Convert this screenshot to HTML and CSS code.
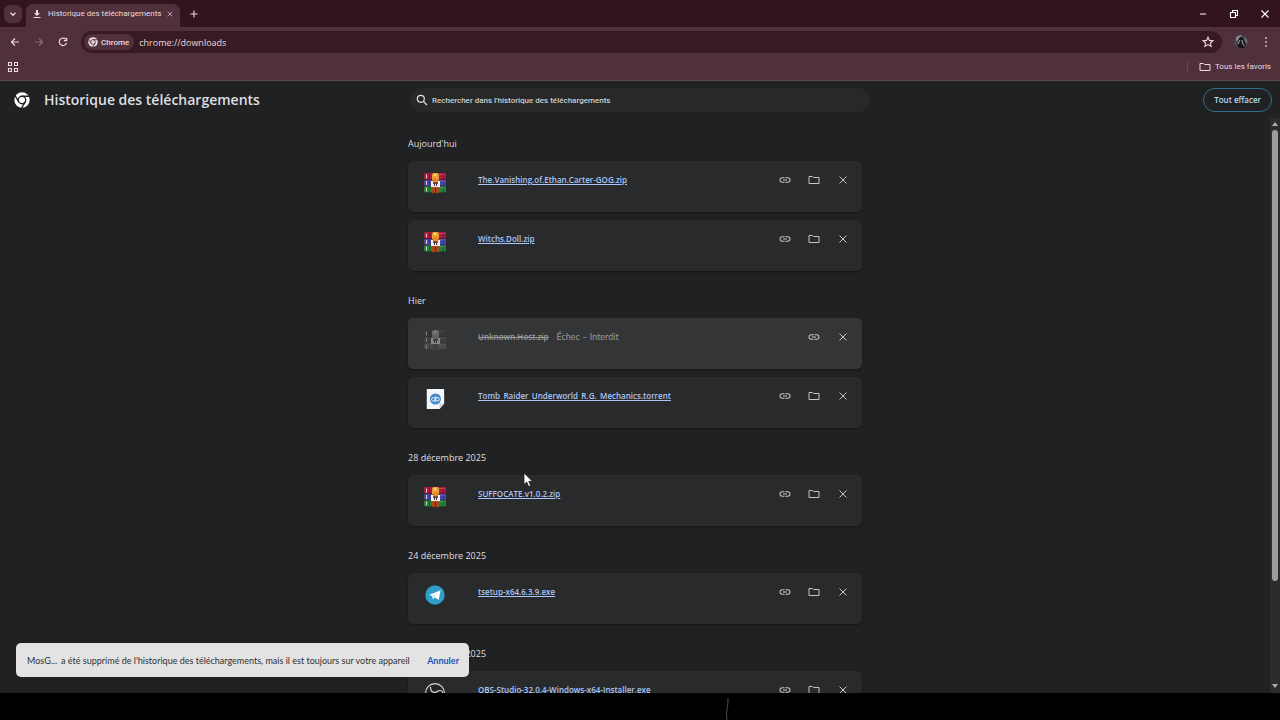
FILE: index.html
```html
<!DOCTYPE html>
<html lang="fr">
<head>
  <meta charset="UTF-8">
  <meta name="viewport" content="width=device-width, initial-scale=1.0">
  <title>Historique des téléchargements</title>
  <link rel="stylesheet" href="styles.css">
</head>
<body>
  <svg class="sprite" aria-hidden="true">
    <symbol id="chrome" viewBox="0 0 24 24">
      <circle cx="12" cy="12" r="11.5" fill="currentColor"/>
      <circle cx="12" cy="12" r="5.6" fill="none" stroke="var(--logo-gap)" stroke-width="2"/>
      <path d="M12 6.4H22.5M7.2 14.8L1.9 5.8M16.8 14.8L11.6 23.8" stroke="var(--logo-gap)" stroke-width="2" fill="none"/>
    </symbol>
    <symbol id="link" viewBox="0 0 24 24">
      <path d="M11 17.500H6.500a5.500 5.500 0 0 1 0-11H11v2H6.500a3.500 3.500 0 0 0 0 7H11zm-3-4.500v-2h8v2zm5 4.500v-2h4.500a3.500 3.500 0 0 0 0-7H13v-2h4.500a5.500 5.500 0 0 1 0 11z" fill="currentColor"/>
    </symbol>
    <symbol id="folder" viewBox="0 0 24 24">
      <path d="M2 5h7l2 2h11v12H2z" fill="none" stroke="currentColor" stroke-width="2" stroke-linejoin="round"/>
    </symbol>
    <symbol id="close" viewBox="0 0 24 24">
      <path d="M5 5l14 14M19 5L5 19" fill="none" stroke="currentColor" stroke-width="2"/>
    </symbol>
    <symbol id="rar" viewBox="0 0 22 20">
      <path d="M1 0h21v7H1L0 6V1z" fill="#a81a40"/>
      <path d="M1 7h21v6H1l-1-1V8z" fill="#4646a8"/>
      <path d="M1 13h21v7H1l-1-1v-5z" fill="#23803a"/>
      <path d="M0 6.500h22M0 13h22M0 19.500h22" stroke="#160f18" stroke-opacity=".45"/>
      <path d="M15 1.500h6M15 8h6M15 14.500h6" stroke="#fff" stroke-opacity=".2"/>
      <path d="M2.500 1.500v4M2.500 8v4M2.500 14.500v4" stroke="#e6cdbb"/>
      <path d="M5.500 1v5M5.500 8v4M5.500 14v5M19.500 1v5M19.500 8v4M19.500 14v5" stroke="#000" stroke-opacity=".25"/>
      <path d="M8 1h7v19H8z" fill="#a34a1d"/>
      <path d="M9 0h5l1 2v5H8V2z" fill="#eea03a"/>
      <path d="M10 1h2v2h-2z" fill="#ffdf72"/>
      <path d="M9 5h5v4H9z" fill="#e58a2c"/>
      <path d="M7 8h2v3h5V8h2v6H7z" fill="#f4eef0"/>
      <path d="M10 10h1v3h-1zM12 10h1v3h-1z" fill="#3a2c3a"/>
      <path d="M11.500 15v5" stroke="#6c2810"/>
    </symbol>
    <symbol id="torrent" viewBox="0 0 22 24">
      <path d="M2 1h19v16l-5 6H2z" fill="#f4f7fa"/>
      <path d="M21 17h-5v6z" fill="#c9d3dc"/>
      <circle cx="11.500" cy="12" r="6" fill="#3f83cb"/>
      <circle cx="9.300" cy="12.300" r="2" fill="none" stroke="#d4e8fc" stroke-width="1.100"/>
      <circle cx="13.700" cy="12.300" r="2" fill="none" stroke="#d4e8fc" stroke-width="1.100"/>
      <path d="M11.200 10.500v5.500M11.900 8.500v5.500" stroke="#d4e8fc"/>
    </symbol>
    <symbol id="telegram" viewBox="0 0 22 22">
      <circle cx="11" cy="11" r="9.700" fill="#2f9fc9"/>
      <path d="M5 10.900L16.600 6.300 14.700 16l-4-2.700-1.900 1.900-.6-3.200z" fill="#fff"/>
      <path d="M8.400 12l5.700-3.700-4.600 4.500-.7 2.200z" fill="#b9dcea"/>
    </symbol>
    <symbol id="obs" viewBox="0 0 22 22">
      <circle cx="11" cy="11" r="9.400" fill="#232425" stroke="#d8d8d8" stroke-width="1.200"/>
      <path d="M6.500 5c0 4 2 5.500 4.500 5.500S13 8.500 16 8.500s3 2.500 2 4.500M11 10.500c-3 1-3 5 0 6.500" fill="none" stroke="#d8d8d8" stroke-width="1.200"/>
    </symbol>
  </svg>

  <header class="browser">
    <div class="tab-strip">
      <button class="tab-search" aria-label="Rechercher dans les onglets">
        <svg viewBox="0 0 12 12"><path d="M3 4.500l3 3 3-3" fill="none" stroke="currentColor" stroke-width="1.500"/></svg>
      </button>
      <div class="tab">
        <svg class="tab-icon" viewBox="0 0 12 12"><path d="M5 2h2v3h2L6 8 3 5h2zM2.500 9h7v1h-7z" fill="currentColor"/></svg>
        <span class="tab-title">Historique des téléchargements</span>
        <button class="tab-close" aria-label="Fermer l'onglet"><svg><use href="#close"/></svg></button>
      </div>
      <button class="new-tab" aria-label="Nouvel onglet">
        <svg viewBox="0 0 12 12"><path d="M6 2.500v7M2.500 6h7" stroke="currentColor" stroke-width="1.100"/></svg>
      </button>
      <div class="window-controls">
        <button aria-label="Réduire"><svg viewBox="0 0 12 12"><path d="M3 6h6" stroke="currentColor" stroke-width="1"/></svg></button>
        <button aria-label="Restaurer"><svg viewBox="0 0 12 12"><path d="M2.500 4.500h5v5h-5zM4.500 4.500v-2h5v5h-2" fill="none" stroke="currentColor" stroke-width="1.100"/></svg></button>
        <button aria-label="Fermer"><svg viewBox="0 0 12 12"><path d="M2.500 2.500l7 7M9.500 2.500l-7 7" stroke="currentColor" stroke-width="1.100"/></svg></button>
      </div>
    </div>

    <div class="toolbar">
      <button aria-label="Retour"><svg viewBox="0 0 12 12"><path d="M10 6H2.500M6 2.500L2.500 6 6 9.500" fill="none" stroke="currentColor" stroke-width="1.200"/></svg></button>
      <button class="dim" aria-label="Avancer" disabled><svg viewBox="0 0 12 12"><path d="M2 6h7.500M6 2.500L9.500 6 6 9.500" fill="none" stroke="currentColor" stroke-width="1.200"/></svg></button>
      <button aria-label="Actualiser"><svg viewBox="0 0 12 12"><path d="M9.500 7A3.700 3.700 0 1 1 8.800 3.400M9.700 1.700v3H6.800" fill="none" stroke="currentColor" stroke-width="1.200"/></svg></button>
      <div class="omnibox">
        <span class="chip"><svg><use href="#chrome"/></svg>Chrome</span>
        <input class="url" type="text" value="chrome://downloads" aria-label="Adresse">
        <button class="star" aria-label="Ajouter aux favoris"><svg viewBox="0 0 12 12"><path d="M6 1.200l1.400 3.200 3.500.3-2.600 2.300.8 3.400L6 8.600l-3.100 1.800.8-3.400L1.100 4.700l3.500-.3z" fill="none" stroke="currentColor" stroke-width="1.100"/></svg></button>
      </div>
      <button class="avatar" aria-label="Profil">
        <svg viewBox="0 0 14 14">
          <circle cx="7" cy="7" r="7" fill="#4a464d"/>
          <path d="M2 2.500A7 7 0 0 1 7 0l1 2-3 3-3 1z" fill="#8d8992"/>
          <path d="M5 3l2-1.500L9 3l1.500 3 1.500 4-2 3H5L3 11l1-4z" fill="#19171c"/>
          <path d="M6 5l-2 4M8 5l.5 3 2 3" stroke="#b5b1ba" fill="none" stroke-width=".9"/>
          <path d="M10 2l3 3v4l-2-3z" fill="#77727c"/>
        </svg>
      </button>
      <button class="more" aria-label="Menu"><svg viewBox="0 0 12 12"><path d="M5.200 1.200h1.600v1.600H5.200zM5.200 5.200h1.600v1.600H5.200zM5.200 9.200h1.600v1.600H5.200z" fill="currentColor"/></svg></button>
    </div>

    <div class="bookmarks">
      <button aria-label="Applications"><svg viewBox="0 0 12 12"><path d="M1.500 1.500h3v3h-3zM7.500 1.500h3v3h-3zM1.500 7.500h3v3h-3zM7.500 7.500h3v3h-3z" fill="none" stroke="currentColor" stroke-width="1.100"/></svg></button>
      <button class="all-bookmarks"><svg><use href="#folder"/></svg>Tous les favoris</button>
    </div>
  </header>

  <div class="page">
    <div class="page-header">
      <div class="brand">
        <svg><use href="#chrome"/></svg>
        <h1>Historique des téléchargements</h1>
      </div>
      <label class="search">
        <svg viewBox="0 0 12 12"><path d="M7.400 7.400L11 11" stroke="currentColor" stroke-width="1.300"/><circle cx="4.800" cy="4.800" r="3.500" fill="none" stroke="currentColor" stroke-width="1.200"/></svg>
        <input type="search" placeholder="Rechercher dans l'historique des téléchargements" aria-label="Rechercher dans l'historique des téléchargements">
      </label>
      <button class="clear-all">Tout effacer</button>
    </div>

    <div class="content">
      <main class="downloads">
        <section>
          <h2>Aujourd'hui</h2>
          <article class="card">
            <svg class="file-icon"><use href="#rar"/></svg>
            <a href="#">The.Vanishing.of.Ethan.Carter-GOG.zip</a>
            <div class="actions">
              <button aria-label="Copier le lien"><svg><use href="#link"/></svg></button>
              <button aria-label="Afficher dans le dossier"><svg><use href="#folder"/></svg></button>
              <button aria-label="Supprimer"><svg><use href="#close"/></svg></button>
            </div>
          </article>
          <article class="card">
            <svg class="file-icon"><use href="#rar"/></svg>
            <a href="#">Witchs.Doll.zip</a>
            <div class="actions">
              <button aria-label="Copier le lien"><svg><use href="#link"/></svg></button>
              <button aria-label="Afficher dans le dossier"><svg><use href="#folder"/></svg></button>
              <button aria-label="Supprimer"><svg><use href="#close"/></svg></button>
            </div>
          </article>
        </section>

        <section>
          <h2>Hier</h2>
          <article class="card failed">
            <svg class="file-icon"><use href="#rar"/></svg>
            <s>Unknown.Host.zip</s>
            <span class="status">Échec – Interdit</span>
            <div class="actions">
              <button aria-label="Copier le lien"><svg><use href="#link"/></svg></button>
              <button aria-label="Supprimer"><svg><use href="#close"/></svg></button>
            </div>
          </article>
          <article class="card">
            <svg class="file-icon"><use href="#torrent"/></svg>
            <a href="#">Tomb_Raider_Underworld_R.G._Mechanics.torrent</a>
            <div class="actions">
              <button aria-label="Copier le lien"><svg><use href="#link"/></svg></button>
              <button aria-label="Afficher dans le dossier"><svg><use href="#folder"/></svg></button>
              <button aria-label="Supprimer"><svg><use href="#close"/></svg></button>
            </div>
          </article>
        </section>

        <section>
          <h2>28 décembre 2025</h2>
          <article class="card">
            <svg class="file-icon"><use href="#rar"/></svg>
            <a href="#">SUFFOCATE.v1.0.2.zip</a>
            <div class="actions">
              <button aria-label="Copier le lien"><svg><use href="#link"/></svg></button>
              <button aria-label="Afficher dans le dossier"><svg><use href="#folder"/></svg></button>
              <button aria-label="Supprimer"><svg><use href="#close"/></svg></button>
            </div>
          </article>
        </section>

        <section>
          <h2>24 décembre 2025</h2>
          <article class="card">
            <svg class="file-icon"><use href="#telegram"/></svg>
            <a href="#">tsetup-x64.6.3.9.exe</a>
            <div class="actions">
              <button aria-label="Copier le lien"><svg><use href="#link"/></svg></button>
              <button aria-label="Afficher dans le dossier"><svg><use href="#folder"/></svg></button>
              <button aria-label="Supprimer"><svg><use href="#close"/></svg></button>
            </div>
          </article>
        </section>

        <section>
          <h2>23 décembre 2025</h2>
          <article class="card">
            <svg class="file-icon"><use href="#obs"/></svg>
            <a href="#">OBS-Studio-32.0.4-Windows-x64-Installer.exe</a>
            <div class="actions">
              <button aria-label="Copier le lien"><svg><use href="#link"/></svg></button>
              <button aria-label="Afficher dans le dossier"><svg><use href="#folder"/></svg></button>
              <button aria-label="Supprimer"><svg><use href="#close"/></svg></button>
            </div>
          </article>
        </section>
      </main>

      <div class="scrollbar" aria-hidden="true">
        <svg viewBox="0 0 8 6"><path d="M4 1l3 4H1z" fill="currentColor"/></svg>
        <div class="track"><div class="thumb"></div></div>
        <svg viewBox="0 0 8 6"><path d="M4 5l3-4H1z" fill="currentColor"/></svg>
      </div>
    </div>

    <div class="toast" role="status">
      <span>MosG...</span>
      <span>a été supprimé de l'historique des téléchargements, mais il est toujours sur votre appareil</span>
      <button>Annuler</button>
    </div>
  </div>

  <footer class="desktop">
    <svg viewBox="0 0 8 27"><path d="M5 5Q5 13 4 17T4 27" fill="none" stroke="#4b4b4b"/></svg>
  </footer>

  <svg class="cursor" viewBox="0 0 12 16" aria-hidden="true"><path d="M1 1v11.500l2.700-2.500 1.900 4.500 2-.9-1.900-4.300h3.800z" fill="#fff" stroke="#111" stroke-width=".7"/></svg>
</body>
</html>
```
FILE: styles.css
```css
* {
  box-sizing: border-box;
}
body {
  margin: 0;
  height: 100vh;
  display: flex;
  flex-direction: column;
  overflow: hidden;
  background: #000;
  color: #dedfe0;
  font-family: "Open Sans", "Noto Sans", sans-serif;
  font-size: 8px;
}
svg {
  display: block;
  width: 12px;
  height: 12px;
  flex: none;
}
button {
  display: flex;
  align-items: center;
  justify-content: center;
  padding: 0;
  border: none;
  background: none;
  color: inherit;
  font: inherit;
}
input {
  border: none;
  outline: none;
  background: none;
  color: inherit;
  font: inherit;
  padding: 0;
}
.sprite {
  position: absolute;
  width: 0;
  height: 0;
}

/* Browser frame */
.browser {
  flex: none;
  background: #50303a;
  color: #ead9dd;
  border-bottom: 1px solid #5a4a4f;
  font-family: Roboto, sans-serif;
}
.tab-strip {
  display: flex;
  align-items: center;
  height: 27px;
  padding-left: 4px;
  background: #31141f;
}
.tab-search {
  width: 18px;
  height: 18px;
  border-radius: 6px;
  background: #50303a;
}
.tab-search svg {
  width: 10px;
  height: 10px;
}
.tab {
  display: flex;
  align-items: center;
  align-self: flex-end;
  gap: 5px;
  height: 23px;
  margin-left: 4px;
  padding: 0 6px 4px 5px;
  border-radius: 7px 7px 0 0;
  background: #50303a;
}
.tab-title {
  min-width: 112px;
  white-space: nowrap;
}
.tab-close svg {
  width: 8px;
  height: 8px;
}
.new-tab {
  margin-left: 8px;
}
.window-controls {
  display: flex;
  margin-left: auto;
  color: #fff;
}
.window-controls button {
  width: 31px;
}
.toolbar {
  display: flex;
  align-items: center;
  gap: 12px;
  height: 30px;
  padding: 0 8px 0 9px;
}
.dim {
  color: #8c6973;
}
.omnibox {
  flex: 1;
  display: flex;
  align-items: center;
  gap: 5px;
  height: 22px;
  padding: 0 8px 0 3px;
  border-radius: 11px;
  background: #371a24;
}
.chip {
  --logo-gap: #50303a;
  display: flex;
  align-items: center;
  gap: 3px;
  height: 16px;
  padding: 0 5px 0 4px;
  border-radius: 8px;
  background: #50303a;
  font-weight: 500;
}
.chip svg {
  width: 10px;
  height: 10px;
}
.url {
  flex: 1;
  font-family: "Open Sans", sans-serif;
  font-size: 9px;
}
.avatar svg {
  width: 14px;
  height: 14px;
}
.more {
  width: 12px;
}
.bookmarks {
  display: flex;
  align-items: center;
  justify-content: space-between;
  height: 23px;
  padding: 0 9px 4px 7px;
}
.all-bookmarks {
  gap: 4px;
  padding-left: 11px;
  border-left: 1px solid #6b4652;
}

/* Downloads page */
.page {
  --logo-gap: #202123;
  position: relative;
  flex: 1;
  min-height: 0;
  display: flex;
  flex-direction: column;
  background: #202123;
}
.page-header {
  flex: none;
  display: grid;
  grid-template-columns: minmax(0, 1fr) 460px minmax(0, 1fr);
  align-items: center;
  height: 37px;
  padding: 0 8px;
}
.brand {
  display: flex;
  align-items: center;
  gap: 14px;
  padding-left: 6px;
}
.brand svg {
  width: 16px;
  height: 16px;
  color: #fff;
}
h1 {
  margin: 0;
  font-size: 14px;
  font-weight: 600;
  white-space: nowrap;
}
.search {
  display: flex;
  align-items: center;
  gap: 4px;
  height: 24px;
  padding: 0 6px;
  border-radius: 12px;
  background: #272828;
}
.search input {
  flex: 1;
}
.search input::placeholder {
  color: #cdcecf;
  font-family: Roboto, sans-serif;
  font-weight: 500;
  opacity: 1;
}
.clear-all {
  justify-self: end;
  height: 24px;
  padding: 0 10px;
  border: 1px solid #2f6f87;
  border-radius: 12px;
  color: #b4dbf5;
  font-weight: 600;
}
.content {
  flex: 1;
  min-height: 0;
  display: flex;
}
.downloads {
  flex: 1;
  overflow: hidden;
  display: flex;
  flex-direction: column;
  align-items: center;
  padding-top: 4px;
}
section {
  flex: none;
  width: 454px;
  max-width: 100%;
}
h2 {
  margin: 0;
  padding: 14px 0 9px;
  font-size: 9px;
  font-weight: 400;
  line-height: 16px;
}
.card {
  display: flex;
  align-items: flex-start;
  height: 51px;
  margin-bottom: 8px;
  padding: 11px 5px 0 16px;
  border-radius: 5px;
  background: #292a2b;
  box-shadow: 0 1px 2px #151617;
}
.card a,
.card s {
  margin-left: 32px;
  color: #a9c6f7;
  font-weight: 600;
  line-height: 16px;
}
.file-icon {
  width: 22px;
  height: 22px;
}
.actions {
  display: flex;
  margin-left: auto;
  color: #c4c5c6;
}
.actions button {
  width: 29px;
  height: 16px;
}
.failed {
  background: #343536;
}
.failed s,
.failed .status {
  color: #989a9b;
}
.failed .status {
  margin-left: 8px;
  font-family: Lato, sans-serif;
  font-size: 9px;
  line-height: 16px;
}
.failed .file-icon {
  filter: grayscale(1);
  opacity: .45;
}
.scrollbar {
  display: flex;
  flex-direction: column;
  align-items: center;
  gap: 3px;
  width: 10px;
  padding: 3px 0 4px;
  background: #2b2c2c;
  color: #b0b0b0;
}
.scrollbar svg {
  width: 8px;
  height: 6px;
}
.track {
  flex: 1;
  width: 6px;
}
.thumb {
  height: 82%;
  border-radius: 3px;
  background: #9c9d9d;
}

.toast {
  position: absolute;
  left: 16px;
  bottom: 16px;
  display: flex;
  align-items: center;
  gap: 4px;
  min-width: 453px;
  height: 34px;
  padding: 0 10px 0 11px;
  border-radius: 5px;
  background: #e3e3e3;
  color: #303132;
  font-family: Lato, sans-serif;
  font-size: 9px;
  white-space: nowrap;
}
.toast button {
  margin-left: auto;
  color: #1b55b5;
  font-weight: 700;
}

.desktop {
  flex: none;
  display: flex;
  justify-content: center;
  height: 27px;
  padding-left: 174px;
  background: #000;
}
.desktop svg {
  width: 8px;
  height: 27px;
}
.cursor {
  position: absolute;
  left: 523px;
  top: 472px;
  width: 12px;
  height: 16px;
}
```
